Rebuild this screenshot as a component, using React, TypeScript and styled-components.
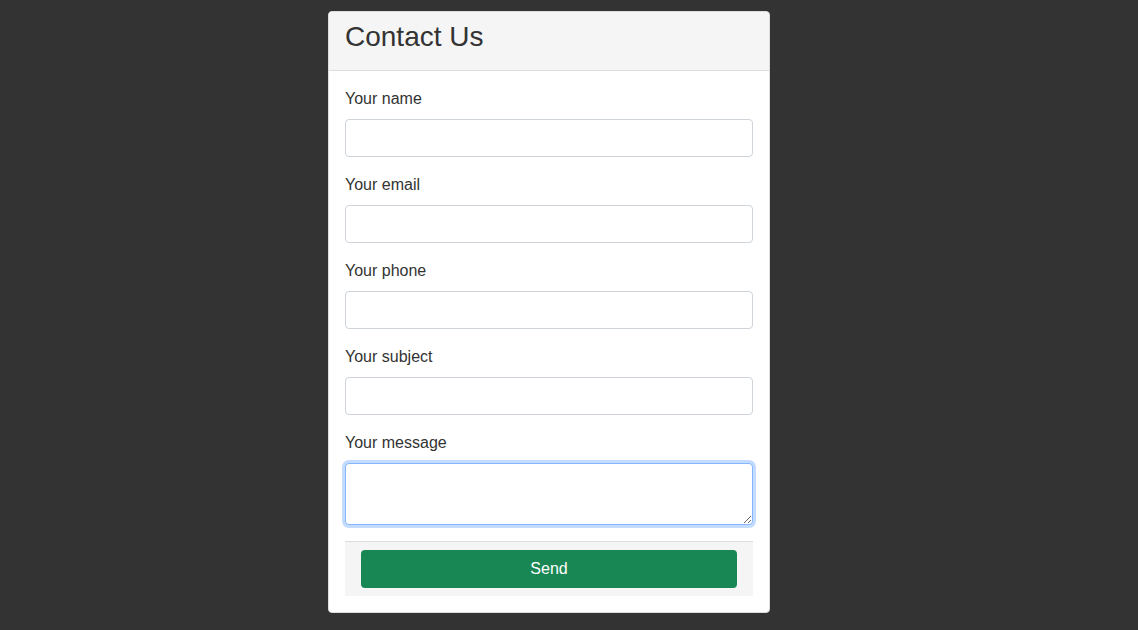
import React from 'react';
import styled, { createGlobalStyle } from 'styled-components';

const GlobalStyle = createGlobalStyle`
  html, body {
    margin: 0;
    padding: 0;
    background: #333333;
  }
  body {
    font-family: "Liberation Sans", Arial, sans-serif;
    color: #333333;
  }
`;

type Field = {
  id: string,
  label: string,
  multiline?: boolean
}

const fields: Field[] = [
  { id: 'name', label: 'Your name' },
  { id: 'email', label: 'Your email' },
  { id: 'phone', label: 'Your phone' },
  { id: 'subject', label: 'Your subject' },
  { id: 'message', label: 'Your message', multiline: true },
];

const App: React.FC = () => {
  return (
    <Page>
      <GlobalStyle />
      <Card>
        <CardHeader>
          <Title>Contact Us</Title>
        </CardHeader>
        <CardBody>
          {fields.map((f) => (
            <Group key={f.id}>
              <Label htmlFor={f.id}>{f.label}</Label>
              {f.multiline
                ? <TextArea id={f.id} $focused />
                : <Input id={f.id} type="text" />}
            </Group>
          ))}
          <Footer>
            <SendButton type="button">Send</SendButton>
          </Footer>
        </CardBody>
      </Card>
    </Page>
  );
};

const Page = styled.div`
  display: flex;
  justify-content: center;
  padding: 11px 40px 0 0;
  min-height: 630px;
  box-sizing: border-box;
`;

const Card = styled.div`
  width: 442px;
  height: 602px;
  box-sizing: border-box;
  background: #ffffff;
  border: 1px solid #dddddd;
  border-radius: 4px;
  overflow: hidden;
`;

const CardHeader = styled.div`
  background: #f5f5f5;
  border-bottom: 1px solid #dddddd;
  padding: 8px 16px;
`;

const Title = styled.h3`
  margin: 0 0 8px;
  font-size: 28px;
  font-weight: 400;
  line-height: 1.2;
  color: #333333;
`;

const CardBody = styled.div`
  padding: 16px;
`;

const Group = styled.div`
  margin-bottom: 16px;
`;

const Label = styled.label`
  display: block;
  font-size: 16px;
  line-height: 24px;
  margin-bottom: 8px;
  color: #333333;
`;

const Input = styled.input`
  display: block;
  width: 100%;
  height: 38px;
  box-sizing: border-box;
  border: 1px solid #ced4da;
  border-radius: 4px;
  padding: 6px 12px;
  font-size: 16px;
  font-family: inherit;
  outline: none;
`;

const TextArea = styled.textarea<{ $focused?: boolean }>`
  display: block;
  width: 100%;
  height: 62px;
  box-sizing: border-box;
  border: 1px solid ${(p) => (p.$focused ? '#86b7fe' : '#ced4da')};
  border-radius: 4px;
  padding: 6px 12px;
  font-size: 16px;
  font-family: inherit;
  outline: none;
  box-shadow: ${(p) => (p.$focused ? '0 0 0 3px #c2dbfe' : 'none')};
`;

const Footer = styled.div`
  background: #f5f5f5;
  border-top: 1px solid #dddddd;
  padding: 8px 16px;
`;

const SendButton = styled.button`
  display: block;
  width: 100%;
  height: 38px;
  border: none;
  border-radius: 4px;
  background: #198754;
  color: #ffffff;
  font-size: 16px;
  font-family: inherit;
  cursor: pointer;
`;

export default App;
